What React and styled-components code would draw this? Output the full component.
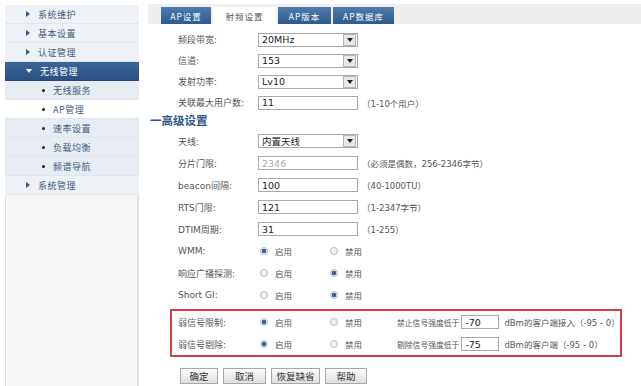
import React from 'react'
import styled, { createGlobalStyle } from 'styled-components'

const GlobalStyle = createGlobalStyle`
    html, body {
        margin: 0;
        padding: 0;
        background: #fff;
    }
    body {
        font-family: "DejaVu Sans", "Noto Sans CJK SC", sans-serif;
        font-size: 10px;
        color: #444;
    }
`

const Page = styled.div`
    display: flex;
    height: 386px;
    overflow: hidden;
`

const Sidebar = styled.div`
    width: 134px;
    margin: 5px 0 0 5px;
    display: flex;
    flex-direction: column;
    flex-shrink: 0;
`

const MenuRow = styled.div`
    height: 19px;
    display: flex;
    align-items: center;
    box-sizing: border-box;
    border-bottom: 1px solid ${({ $active }) => ($active ? '#24497a' : '#dfe5ec')};
    padding-left: ${({ $sub }) => ($sub ? '37px' : '21px')};
    background: ${({ $active, $current, $sub }) =>
        $active
            ? 'linear-gradient(#3b6596, #2a5285)'
            : $current
            ? '#ffffff'
            : $sub
            ? '#e6ecf2'
            : '#eef2f6'};
    color: ${({ $active }) => ($active ? '#fff' : '#3f5b82')};
    font-family: "Noto Sans CJK SC", sans-serif;
    font-size: 9px;
    letter-spacing: 0.5px;
`

const Arrow = styled.span`
    width: 0;
    height: 0;
    margin-right: 8px;
    ${({ $open }) =>
        $open
            ? `border-left: 3px solid transparent;
               border-right: 3px solid transparent;
               border-top: 4px solid #fff;`
            : `border-top: 3px solid transparent;
               border-bottom: 3px solid transparent;
               border-left: 4px solid #2f5a8c;`}
`

const Bullet = styled.span`
    width: 3px;
    height: 3px;
    border-radius: 50%;
    background: #222;
    margin-right: 8px;
`

const SideRest = styled.div`
    flex: 1;
    background: #f6f6f6;
    border-left: 1px solid #dedede;
    border-right: 2px solid #e2e2e2;
`

const Main = styled.div`
    flex: 1;
    margin-left: 9px;
    display: flex;
    flex-direction: column;
`

const TabBar = styled.div`
    margin-top: 4px;
    height: 20px;
    background: #efefef;
    display: flex;
    align-items: flex-end;
    padding-left: 13px;
    gap: 2px;
`

const Tab = styled.div`
    height: 17px;
    width: ${({ $w }) => $w}px;
    display: flex;
    align-items: center;
    justify-content: center;
    font-family: "Noto Sans CJK SC", sans-serif;
    font-size: 8.5px;
    letter-spacing: 1px;
    color: ${({ $active }) => ($active ? '#555' : '#fff')};
    background: ${({ $active }) =>
        $active ? '#fff' : 'linear-gradient(#4f7cac, #2e5a8c)'};
`

const Form = styled.div`
    display: flex;
    flex-direction: column;
    padding-top: 5px;
`

const Row = styled.div`
    height: ${({ $h }) => $h || 22}px;
    display: flex;
    align-items: center;
    white-space: nowrap;
    padding-left: ${({ $pad }) => ($pad !== undefined ? $pad : 30)}px;
`

const Label = styled.span`
    width: 80px;
    flex-shrink: 0;
    color: #555;
    font-size: 9px;
    font-family: "DejaVu Sans", "Noto Sans CJK SC", sans-serif;
`

const Heading = styled.div`
    height: 20px;
    margin-top: -3px;
    display: flex;
    align-items: center;
    padding-left: 2px;
    color: #2f5a8c;
    font-family: "Noto Sans CJK SC", sans-serif;
    font-weight: bold;
    font-size: 11.5px;
`

const SelectBox = styled.div`
    width: 100px;
    height: 14px;
    box-sizing: border-box;
    border: 1px solid #a9a9a9;
    display: flex;
    align-items: center;
    justify-content: space-between;
    padding-left: 3px;
    background: #fff;
    color: #222;
    font-size: 9.5px;
    font-family: "DejaVu Sans", "Noto Sans CJK SC", sans-serif;
`

const DropBtn = styled.span`
    width: 11px;
    height: 10px;
    margin-right: 1px;
    border: 1px solid #b5b5b5;
    background: #e8e8e8;
    display: flex;
    align-items: center;
    justify-content: center;
    &:after {
        content: '';
        border-left: 3px solid transparent;
        border-right: 3px solid transparent;
        border-top: 4px solid #222;
    }
`

const Field = styled.div`
    width: ${({ $w }) => $w || 100}px;
    height: 14px;
    flex-shrink: 0;
    box-sizing: border-box;
    border: 1px solid #a9a9a9;
    display: flex;
    align-items: center;
    padding-left: 3px;
    color: ${({ $muted }) => ($muted ? '#aaa' : '#222')};
    font-size: 9.5px;
    font-family: "DejaVu Sans", sans-serif;
`

const Hint = styled.span`
    margin-left: 4px;
    color: #555;
    font-size: 8.5px;
    font-family: "DejaVu Sans", "Noto Sans CJK SC", sans-serif;
`

const RadioGroup = styled.span`
    display: flex;
    align-items: center;
    flex-shrink: 0;
    width: ${({ $w }) => $w}px;
    margin-left: ${({ $ml }) => $ml || 0}px;
    color: #555;
    font-family: "Noto Sans CJK SC", sans-serif;
    font-size: 8.5px;
`

const Radio = styled.span`
    width: 8px;
    height: 8px;
    border-radius: 50%;
    box-sizing: border-box;
    border: 1px solid #bbb;
    background: ${({ $on }) =>
        $on ? 'radial-gradient(circle, #3a5f8e 0 2px, #e4e8ee 2.5px)' : '#f1f1f1'};
    margin-right: 7px;
`

const WarnBox = styled.div`
    margin: 3px 0 0 22px;
    width: 452px;
    box-sizing: border-box;
    border: 2px solid #dc3a44;
    display: flex;
    flex-direction: column;
`

const Note = styled.span`
    margin-left: 7px;
    margin-right: 2px;
    color: #555;
    font-family: "Noto Sans CJK SC", sans-serif;
    font-size: 7.8px;
`

const Unit = styled.span`
    margin-left: 5px;
    color: #555;
    font-size: 8.5px;
    font-family: "DejaVu Sans", "Noto Sans CJK SC", sans-serif;
`

const Buttons = styled.div`
    display: flex;
    gap: 5px;
    padding-left: 32px;
    margin-top: 11px;
`

const Button = styled.button`
    height: 16px;
    width: ${({ $w }) => $w}px;
    padding: 0;
    border: 1px solid #a8a8a8;
    background: linear-gradient(#fbfbfb, #dedede);
    color: #333;
    font-family: "Noto Sans CJK SC", sans-serif;
    font-size: 9.5px;
    line-height: 14px;
`

const menu = [
    { text: '系统维护' },
    { text: '基本设置' },
    { text: '认证管理' },
    { text: '无线管理', active: true },
    { text: '无线服务', sub: true },
    { text: 'AP管理', sub: true, current: true },
    { text: '速率设置', sub: true },
    { text: '负载均衡', sub: true },
    { text: '频谱导航', sub: true },
    { text: '系统管理' },
]

const tabs = [
    { text: 'AP设置', w: 50 },
    { text: '射频设置', w: 63, active: true },
    { text: 'AP版本', w: 53 },
    { text: 'AP数据库', w: 61 },
]

function RadioPair({ on }) {
    return (
        <>
            <RadioGroup $w={70} $ml={2}>
                <Radio $on={on} />
                启用
            </RadioGroup>
            <RadioGroup $w={60}>
                <Radio $on={!on} />
                禁用
            </RadioGroup>
        </>
    )
}

const App = () => {
    return (
        <>
            <GlobalStyle />
            <Page>
                <Sidebar>
                    {menu.map((m) => (
                        <MenuRow
                            key={m.text}
                            $active={m.active}
                            $sub={m.sub}
                            $current={m.current}
                        >
                            {m.sub ? <Bullet /> : <Arrow $open={m.active} />}
                            {m.text}
                        </MenuRow>
                    ))}
                    <SideRest />
                </Sidebar>
                <Main>
                    <TabBar>
                        {tabs.map((t) => (
                            <Tab key={t.text} $w={t.w} $active={t.active}>
                                {t.text}
                            </Tab>
                        ))}
                    </TabBar>
                    <Form>
                        <Row $h={21}>
                            <Label>频段带宽:</Label>
                            <SelectBox>
                                20MHz
                                <DropBtn />
                            </SelectBox>
                        </Row>
                        <Row $h={21}>
                            <Label>信道:</Label>
                            <SelectBox>
                                153
                                <DropBtn />
                            </SelectBox>
                        </Row>
                        <Row $h={21}>
                            <Label>发射功率:</Label>
                            <SelectBox>
                                Lv10
                                <DropBtn />
                            </SelectBox>
                        </Row>
                        <Row $h={21}>
                            <Label>关联最大用户数:</Label>
                            <Field>11</Field>
                            <Hint>（1-10个用户）</Hint>
                        </Row>
                        <Heading>一高级设置</Heading>
                        <Row>
                            <Label>天线:</Label>
                            <SelectBox>
                                内置天线
                                <DropBtn />
                            </SelectBox>
                        </Row>
                        <Row>
                            <Label>分片门限:</Label>
                            <Field $muted>2346</Field>
                            <Hint>（必须是偶数，256-2346字节）</Hint>
                        </Row>
                        <Row>
                            <Label>beacon间隔:</Label>
                            <Field>100</Field>
                            <Hint>（40-1000TU）</Hint>
                        </Row>
                        <Row>
                            <Label>RTS门限:</Label>
                            <Field>121</Field>
                            <Hint>（1-2347字节）</Hint>
                        </Row>
                        <Row>
                            <Label>DTIM周期:</Label>
                            <Field>31</Field>
                            <Hint>（1-255）</Hint>
                        </Row>
                        <Row>
                            <Label>WMM:</Label>
                            <RadioPair on />
                        </Row>
                        <Row>
                            <Label>响应广播探测:</Label>
                            <RadioPair on={false} />
                        </Row>
                        <Row>
                            <Label>Short GI:</Label>
                            <RadioPair on={false} />
                        </Row>
                        <WarnBox>
                            <Row $pad={6}>
                                <Label>弱信号限制:</Label>
                                <RadioPair on />
                                <Note>禁止信号强度低于</Note>
                                <Field $w={38}>-70</Field>
                                <Unit>dBm的客户端接入（-95 - 0）</Unit>
                            </Row>
                            <Row $pad={6}>
                                <Label>弱信号剔除:</Label>
                                <RadioPair on />
                                <Note>剔除信号强度低于</Note>
                                <Field $w={38}>-75</Field>
                                <Unit>dBm的客户端（-95 - 0）</Unit>
                            </Row>
                        </WarnBox>
                        <Buttons>
                            <Button $w={38}>确定</Button>
                            <Button $w={43}>取消</Button>
                            <Button $w={49}>恢复缺省</Button>
                            <Button $w={42}>帮助</Button>
                        </Buttons>
                    </Form>
                </Main>
            </Page>
        </>
    )
}

export default App
